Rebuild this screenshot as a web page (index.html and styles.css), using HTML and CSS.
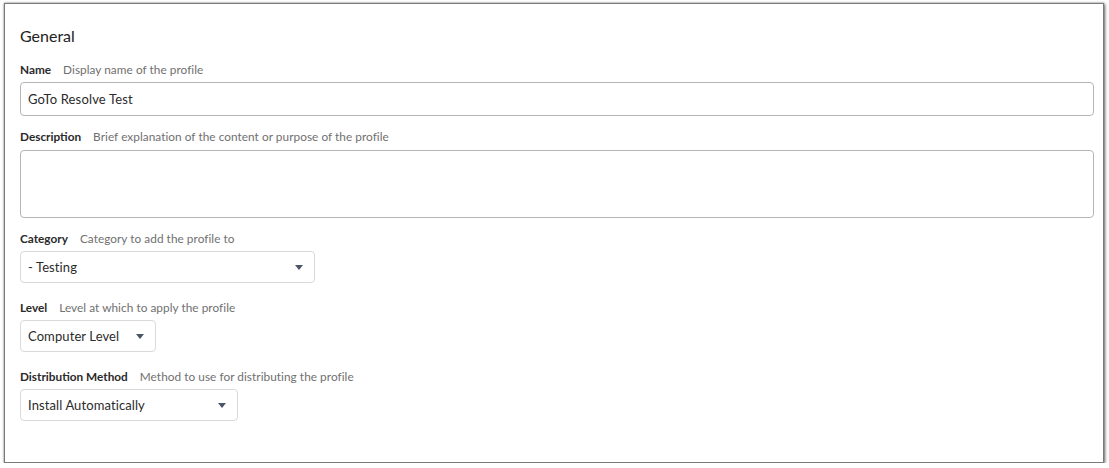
FILE: index.html
```html
<!DOCTYPE html>
<html>
<head>
<meta charset="utf-8">
<link rel="stylesheet" href="styles.css">
</head>
<body>
<div class="panel">
  <h2 class="title">General</h2>
  <div class="field">
    <div class="label"><b>Name</b><span>Display name of the profile</span></div>
    <div class="input">GoTo Resolve Test</div>
  </div>
  <div class="field">
    <div class="label"><b>Description</b><span>Brief explanation of the content or purpose of the profile</span></div>
    <div class="textarea"></div>
  </div>
  <div class="field">
    <div class="label"><b>Category</b><span>Category to add the profile to</span></div>
    <div class="select w-category"><span>- Testing</span><i class="caret"></i></div>
  </div>
  <div class="field spaced">
    <div class="label"><b>Level</b><span>Level at which to apply the profile</span></div>
    <div class="select w-level"><span>Computer Level</span><i class="caret"></i></div>
  </div>
  <div class="field spaced">
    <div class="label"><b>Distribution Method</b><span>Method to use for distributing the profile</span></div>
    <div class="select w-dist"><span>Install Automatically</span><i class="caret"></i></div>
  </div>
</div>
</body>
</html>
```

FILE: styles.css
```css
* { box-sizing: border-box; }
html, body { margin: 0; padding: 0; background: #fff; }
body {
  font-family: Lato, "Liberation Sans", sans-serif;
  color: #2b2b2b;
}
.panel {
  margin: 3px 0 0 4px;
  width: 1100px;
  height: 460px;
  background: #fff;
  border: 1px solid #7a7a7a;
  box-shadow: 1px 1px 3px rgba(0,0,0,0.55), 0 0 2px rgba(0,0,0,0.35);
  padding: 22px 9px 0 15px;
  display: flex;
  flex-direction: column;
}
.title {
  margin: 0 0 17px;
  font-size: 16px;
  font-weight: 400;
  line-height: 20px;
  color: #222;
}
.field { display: flex; flex-direction: column; align-items: flex-start; margin-bottom: 14px; }
.field.spaced { margin-top: 4px; }
.label {
  font-size: 11.8px;
  line-height: 14px;
  margin-bottom: 5px;
  display: flex;
  gap: 12px;
}
.label b { font-weight: 700; color: #2a2a2a; }
.label span { color: #707070; letter-spacing: 0.05px; }
.input, .textarea {
  width: 100%;
  border: 1px solid #b5b5b5;
  border-radius: 4px;
  background: #fff;
}
.input {
  height: 34px;
  padding: 0 8px 0 7px;
  font-size: 13px;
  letter-spacing: 0.15px;
  display: flex;
  align-items: center;
}
.textarea { height: 68px; margin-top: 1px; }
.select {
  height: 32px;
  border: 1px solid #d9d9d9;
  border-radius: 4px;
  display: flex;
  align-items: center;
  justify-content: space-between;
  padding: 0 11px 0 7px;
  font-size: 13px;
  letter-spacing: 0.1px;
}
.w-category { width: 295px; }
.w-level { width: 136px; }
.w-dist { width: 218px; }
.caret {
  width: 0; height: 0;
  border-left: 4px solid transparent;
  border-right: 4px solid transparent;
  border-top: 5px solid #4a5568;
}
```
